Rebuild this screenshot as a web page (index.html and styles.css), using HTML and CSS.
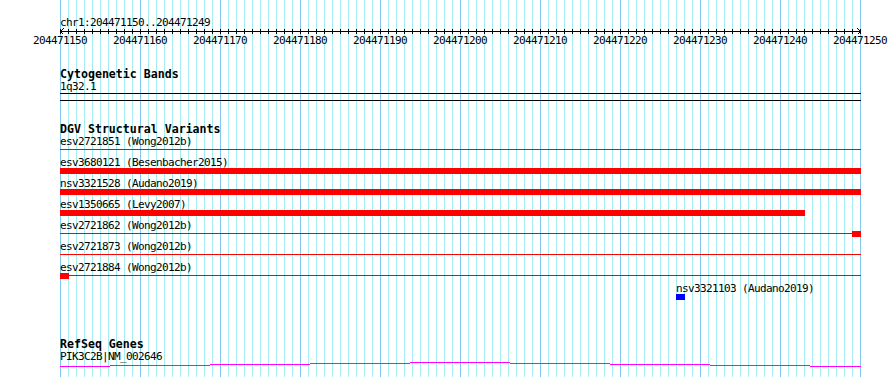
FILE: index.html
```html
<!DOCTYPE html>
<html lang="en">
<head>
    <meta charset="UTF-8">
    <title>chr1:204471150..204471249</title>
    <link rel="stylesheet" href="styles.css">
</head>
<body>
    <div class="panel">
        <!-- ruler -->
        <div class="ruler">
            <div class="ruler-title">chr1:204471150..204471249</div>
            <svg class="axis" width="890" height="7" viewBox="0 0 890 7" shape-rendering="crispEdges">
                <defs>
                    <pattern id="tick" x="60" y="0" width="8" height="7" patternUnits="userSpaceOnUse">
                        <rect x="0" y="1" width="1" height="5" fill="#000"/>
                    </pattern>
                </defs>
                <rect x="60" y="0" width="801" height="7" fill="url(#tick)"/>
                <rect x="60" y="3" width="801" height="1" fill="#000"/>
                <path d="M60.5 3.5 L63.5 0.5 M60.5 3.5 L63.5 6.5 M860.5 3.5 L857.5 0.5 M860.5 3.5 L857.5 6.5" stroke="#000" fill="none"/>
            </svg>
            <div class="ruler-labels">
                <span>204471150</span>
                <span>204471160</span>
                <span>204471170</span>
                <span>204471180</span>
                <span>204471190</span>
                <span>204471200</span>
                <span>204471210</span>
                <span>204471220</span>
                <span>204471230</span>
                <span>204471240</span>
                <span>204471250</span>
            </div>
        </div>

        <!-- Cytogenetic Bands -->
        <section class="track track-cyto">
            <div class="track-title">Cytogenetic Bands</div>
            <div class="label">1q32.1</div>
            <div class="band"></div>
        </section>

        <!-- DGV Structural Variants -->
        <section class="track track-dgv">
            <div class="track-title">DGV Structural Variants</div>

            <div class="feature">
                <div class="label">esv2721851 (Wong2012b)</div>
                <div class="glyph"><div class="line"></div></div>
            </div>
            <div class="feature">
                <div class="label">esv3680121 (Besenbacher2015)</div>
                <div class="glyph"><div class="bar" style="width:801px"></div></div>
            </div>
            <div class="feature">
                <div class="label">nsv3321528 (Audano2019)</div>
                <div class="glyph"><div class="bar" style="width:801px"></div></div>
            </div>
            <div class="feature">
                <div class="label">esv1350665 (Levy2007)</div>
                <div class="glyph"><div class="bar" style="width:745px"></div></div>
            </div>
            <div class="feature">
                <div class="label">esv2721862 (Wong2012b)</div>
                <div class="glyph"><div class="line"></div><div class="bar" style="margin-left:792px;width:9px"></div></div>
            </div>
            <div class="feature">
                <div class="label">esv2721873 (Wong2012b)</div>
                <div class="glyph"><div class="line"></div></div>
            </div>
            <div class="feature">
                <div class="label">esv2721884 (Wong2012b)</div>
                <div class="glyph"><div class="line"></div><div class="bar" style="width:9px"></div></div>
            </div>
            <div class="feature">
                <div class="label" style="margin-left:616px">nsv3321103 (Audano2019)</div>
                <div class="glyph"><div class="bar bar-loss" style="margin-left:616px;width:9px"></div></div>
            </div>
        </section>

        <!-- RefSeq Genes -->
        <section class="track track-genes">
            <div class="track-title">RefSeq Genes</div>
            <div class="label">PIK3C2B|NM_002646</div>
            <svg class="gene" width="801" height="6" viewBox="0 0 801 6" shape-rendering="crispEdges" fill="#ff00ff">
                <rect x="0" y="4" width="50" height="1"/>
                <rect x="50" y="3" width="100" height="1"/>
                <rect x="150" y="2" width="100" height="1"/>
                <rect x="250" y="1" width="100" height="1"/>
                <rect x="350" y="0" width="100" height="1"/>
                <rect x="450" y="1" width="100" height="1"/>
                <rect x="550" y="2" width="100" height="1"/>
                <rect x="650" y="3" width="100" height="1"/>
                <rect x="750" y="4" width="51" height="1"/>
            </svg>
        </section>
    </div>
</body>
</html>
```

FILE: styles.css
```css
html, body {
    margin: 0;
    background: #fff;
}
body {
    width: 890px;
    height: 377px;
    overflow: hidden;
    font-family: "DejaVu Sans Mono", monospace;
    font-size: 11px;
    letter-spacing: -0.62px;
    color: #000;
}
.panel {
    height: 377px;
    background-image:
        repeating-linear-gradient(90deg, #80c8f0 0 1px, transparent 1px 80px),
        repeating-linear-gradient(90deg, #a4ecf0 0 1px, transparent 1px 8px);
    background-size: 801px 100%;
    background-position: 60px 0;
    background-repeat: no-repeat;
}

/* ruler */
.ruler {
    padding-top: 16px;
}
.ruler-title {
    margin-left: 60px;
    line-height: 13px;
    white-space: nowrap;
}
.axis {
    display: block;
    margin-top: -1px;
}
.ruler-labels {
    display: flex;
    margin-top: -1px;
    margin-left: 20px;
    line-height: 13px;
    white-space: nowrap;
}
.ruler-labels span {
    flex: 0 0 80px;
    text-align: center;
}

/* tracks */
.track {
    padding-left: 60px;
}
.track-cyto { margin-top: 21px; }
.track-dgv { margin-top: 22px; }
.track-genes { margin-top: 38px; }

.track-title {
    font-weight: bold;
    font-size: 11.6px;
    letter-spacing: 0;
    line-height: 12px;
    white-space: nowrap;
}
.label {
    line-height: 13px;
    white-space: nowrap;
}
.band {
    box-sizing: border-box;
    width: 801px;
    height: 8px;
    border-top: 1px solid #000;
    border-bottom: 1px solid #000;
}

.feature {
    width: 801px;
    margin-bottom: 3px;
}
.glyph {
    display: grid;
    height: 6px;
    margin-top: -1px;
}
.glyph > div {
    grid-area: 1 / 1;
    justify-self: start;
}
.line {
    width: 801px;
    height: 1px;
    margin-top: 2px;
    background: #f00;
}
.bar {
    height: 6px;
    background: #f00;
}
.bar-loss {
    background: #00f;
}
.gene {
    display: block;
    margin-top: -1px;
}
```
